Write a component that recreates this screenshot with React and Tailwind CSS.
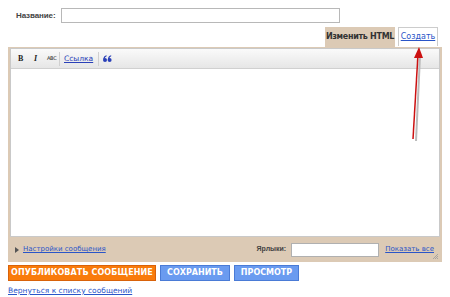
export default function App() {
  const tan = "bg-[#dccab5]";
  return (
    <div className="relative w-[450px] h-[297px] bg-white text-[8px] text-[#333]" style={{ fontFamily: "'DejaVu Sans', Verdana, sans-serif" }}>
      <div className="flex items-center pt-2 pl-4">
        <span className="text-[8px] font-bold text-[#444] tracking-[-0.1px]" style={{ fontFamily: "'Liberation Sans', Arial, sans-serif" }}>Название:</span>
        <div className="ml-[5px] w-[279px] h-[15px] border border-[#b8b8b8] bg-white"></div>
      </div>
      <div className="flex justify-end items-end pr-[12px] mt-[4px] gap-[3px]">
        <div className={`${tan} h-[20px] w-[70px] flex items-center justify-center font-bold text-[8px] text-[#333] tracking-[-0.3px]`}>Изменить HTML</div>
        <div className="h-[19px] w-[40px] mb-[1px] border border-[#ccc] border-b-0 bg-white flex items-center justify-center text-[#2a55c8] underline text-[8px]">Создать</div>
      </div>
      <div className={`mx-[8px] w-[434px] ${tan} px-[2px] pt-[1px] pb-0`}>
        <div className="border border-[#c9c9c9] bg-white">
          <div className="h-[20px] flex items-center pl-[7px] bg-gradient-to-b from-[#fafafa] to-[#e6e6e6] border-b border-[#d0d0d0] text-[#222]">
            <span className="font-bold text-[8px] w-[16px]" style={{ fontFamily: "'Liberation Serif', serif" }}>B</span>
            <span className="font-bold italic text-[8px] w-[13px]" style={{ fontFamily: "'Liberation Serif', serif" }}>I</span>
            <span className="text-[5px] w-[10px] tracking-[-0.3px]">ABC</span>
            <span className="w-px h-[14px] bg-[#d0d0d0] mx-[2px]"></span>
            <span className="text-[#2a40b8] underline text-[7.5px] px-[2px]">Ссылка</span>
            <span className="w-px h-[14px] bg-[#d0d0d0] mx-[3px]"></span>
            <svg width="9" height="7" viewBox="0 0 9 7" className="ml-[1px]">
              <g fill="#2a40b8">
                <circle cx="2" cy="5" r="2" />
                <path d="M0.2 4.6 C0.4 2 1.6 0.6 3.6 0.2 L3.6 1.2 C2.4 1.6 1.8 2.6 1.8 3.6 Z" />
                <circle cx="6.6" cy="5" r="2" />
                <path d="M4.8 4.6 C5 2 6.2 0.6 8.2 0.2 L8.2 1.2 C7 1.6 6.4 2.6 6.4 3.6 Z" />
              </g>
            </svg>
          </div>
          <div className="h-[167px] bg-white"></div>
        </div>
        <div className="h-[25px] flex items-center relative">
          <span className="ml-[5px] w-0 h-0 border-y-[3px] border-y-transparent border-l-[4px] border-l-[#555]"></span>
          <span className="ml-[4px] text-[#2a55c8] underline text-[7px]">Настройки сообщения</span>
          <span className="ml-auto text-[#444] font-bold text-[7px]" style={{ fontFamily: "'Liberation Sans', Arial, sans-serif" }}>Ярлыки:</span>
          <div className="ml-[5px] w-[88px] h-[14px] border border-[#b0b0b0] bg-white"></div>
          <span className="ml-[6px] mr-[6px] text-[#2a55c8] underline text-[7px]">Показать все</span>
          <svg className="absolute right-[1px] bottom-[2px]" width="7" height="7" viewBox="0 0 7 7">
            <path d="M6 1 L1 6 M6 3 L3 6 M6 5 L5 6" stroke="#999" strokeWidth="0.8" />
          </svg>
        </div>
      </div>
      <div className="flex gap-[4px] ml-[8px] mt-[3px]">
        <div className="h-[16px] w-[148px] bg-[#f97b0b] border border-[#d8620a] text-white font-bold text-[8px] flex items-center justify-center tracking-[0.1px]">ОПУБЛИКОВАТЬ СООБЩЕНИЕ</div>
        <div className="h-[16px] w-[70px] bg-[#6a9bf0] border border-[#4a7bd6] text-white font-bold text-[8px] flex items-center justify-center">СОХРАНИТЬ</div>
        <div className="h-[16px] w-[65px] bg-[#6a9bf0] border border-[#4a7bd6] text-white font-bold text-[8px] flex items-center justify-center">ПРОСМОТР</div>
      </div>
      <div className="ml-[8px] mt-[4px] text-[#2a55c8] underline text-[7.5px]">Вернуться к списку сообщений</div>
      <svg className="absolute left-0 top-0 pointer-events-none" width="450" height="297">
        <line x1="420" y1="56" x2="416" y2="141" stroke="#bbb" strokeWidth="2" />
        <line x1="418" y1="54" x2="413" y2="139" stroke="#cc1111" strokeWidth="1.5" />
        <polygon points="419,47 414,58 423,58" fill="#cc1111" />
      </svg>
    </div>
  );
}
